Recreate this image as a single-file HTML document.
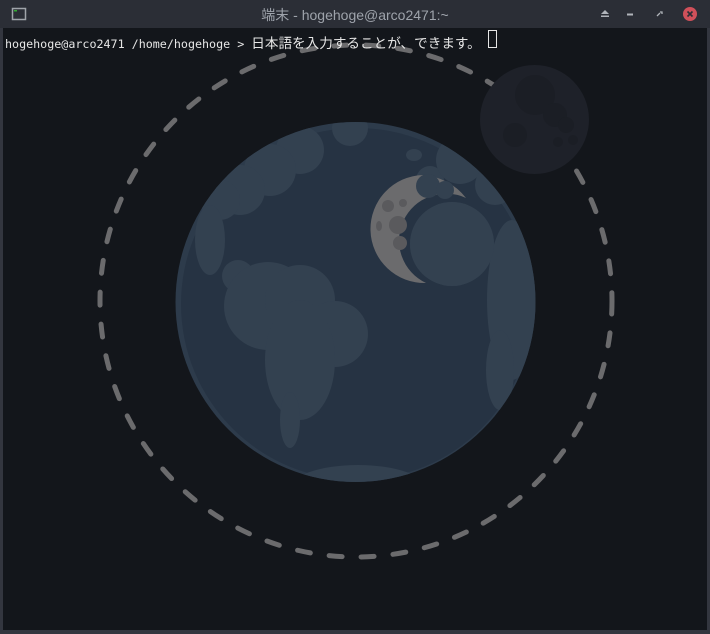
<!DOCTYPE html>
<html><head><meta charset="utf-8"><style>
html,body{margin:0;padding:0;width:710px;height:634px;overflow:hidden;background:#33363f}
.title{position:absolute;left:0;top:0;width:710px;height:28px;background:#2b2e36;}
.title .t{position:absolute;left:0;width:710px;top:5px;text-align:center;color:#9ea3ab;font:14px "Liberation Sans","Noto Sans CJK JP",sans-serif}
.term{position:absolute;left:3px;top:28px;width:704px;height:602px;background:#13161b}
.line{position:absolute;left:2px;top:4px;color:#e6e6e6;font:11.7px "DejaVu Sans Mono","Noto Sans CJK JP",monospace;white-space:pre}
.line span{font:13.6px "Noto Sans CJK JP",sans-serif;position:relative;top:0px}
.cur{position:absolute;left:485px;top:2px;width:7px;height:16px;border:1px solid #e6e6e6}
</style></head><body>
<div class="title"><div class="t">端末 - hogehoge@arco2471:~</div>
<svg width="710" height="28" style="position:absolute;left:0;top:0">
<rect x="12.5" y="8.5" width="13" height="11" fill="none" stroke="#a0a4aa" stroke-width="1.5"/>
<rect x="14" y="10" width="3" height="1.5" fill="#3a3"/>
<path d="M601 14 L605 10 L609 14Z" fill="#b0b4ba"/><rect x="601" y="15.5" width="8" height="1.5" fill="#b0b4ba"/>
<rect x="627" y="13.5" width="6" height="2" fill="#b0b4ba"/>
<path d="M657 16 l3 -3 M660 12 l2 0 0 2" stroke="#b0b4ba" stroke-width="1.3" fill="none"/>
<circle cx="690" cy="14" r="7" fill="#d0505a"/><path d="M687.5 11.5l5 5M692.5 11.5l-5 5" stroke="#2b2e36" stroke-width="1.6"/>
</svg></div>
<div class="term">
<svg width="704" height="602" style="position:absolute;left:0;top:0">
<g transform="translate(-3,-28)">
<circle cx="356" cy="301" r="256" fill="none" stroke="#6b6b6d" stroke-width="5" stroke-linecap="round" stroke-dasharray="13 19"/>
<circle cx="534.5" cy="119.5" r="54.5" fill="#1e2129"/>
<g fill="#1b1e25"><circle cx="535" cy="95" r="20"/><circle cx="555" cy="115" r="12"/><circle cx="566" cy="125" r="8"/><circle cx="515" cy="135" r="12"/><circle cx="558" cy="142" r="5"/><circle cx="573" cy="140" r="5"/></g>
<defs><clipPath id="e"><circle cx="355.5" cy="302" r="180"/></clipPath></defs>
<circle cx="355.5" cy="302" r="180" fill="#2d3b4b"/>
<g clip-path="url(#e)">
<circle cx="357" cy="304" r="176" fill="#263343"/>
<g fill="#334150">
<circle cx="350" cy="128" r="18"/>
<circle cx="300" cy="150" r="24"/><circle cx="270" cy="170" r="26"/><circle cx="240" cy="190" r="25"/><circle cx="220" cy="200" r="20"/>
<ellipse cx="210" cy="240" rx="15" ry="35"/>
<circle cx="238" cy="276" r="16"/><circle cx="268" cy="306" r="44"/><circle cx="300" cy="300" r="35"/><circle cx="335" cy="334" r="33"/>
<ellipse cx="300" cy="360" rx="35" ry="60"/><ellipse cx="290" cy="420" rx="10" ry="28"/>
<circle cx="452" cy="244" r="42"/>
<ellipse cx="512" cy="300" rx="25" ry="80"/><ellipse cx="500" cy="370" rx="14" ry="40"/>
<circle cx="430" cy="180" r="14"/><circle cx="460" cy="160" r="24"/><circle cx="495" cy="185" r="20"/>
<ellipse cx="414" cy="155" rx="8" ry="6"/>
<ellipse cx="358" cy="490" rx="70" ry="25"/>
</g>
<path d="M423 175 a54 54 0 1 0 3 108 a42 42 0 0 1 40 -85 a60 60 0 0 0 -43 -23z" fill="#6b6b6d"/>
<g fill="#5a5a5d"><circle cx="398" cy="225" r="9"/><circle cx="388" cy="206" r="6"/><circle cx="403" cy="203" r="4"/><circle cx="400" cy="243" r="7"/><ellipse cx="379" cy="226" rx="3" ry="5"/></g>
<circle cx="452" cy="244" r="42" fill="#334150"/>
<circle cx="428" cy="186" r="12" fill="#334150"/><circle cx="445" cy="190" r="9" fill="#334150"/>
</g>
</g>
</svg>
<div class="line">hogehoge@arco2471 /home/hogehoge &gt; <span>日本語を入力することが、できます。</span></div>
<div class="cur"></div>
</div>
</body></html>
